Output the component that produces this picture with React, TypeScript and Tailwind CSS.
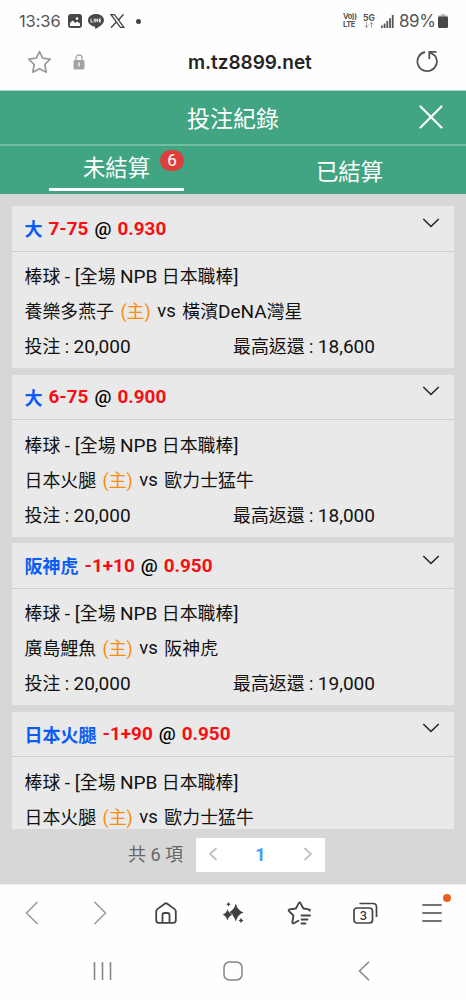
import React from 'react';

interface Bet {
  pick: string;
  line: string;
  odds: string;
  home: string;
  away: string;
  awayLatin?: string;
  awaySuffix?: string;
  stake?: string;
  maxReturn?: string;
}

const bets: Bet[] = [
  { pick: '大', line: '7-75', odds: '0.930', home: '養樂多燕子', away: '橫濱', awayLatin: 'DeNA', awaySuffix: '灣星', stake: '20,000', maxReturn: '18,600' },
  { pick: '大', line: '6-75', odds: '0.900', home: '日本火腿', away: '歐力士猛牛', stake: '20,000', maxReturn: '18,000' },
  { pick: '阪神虎', line: '-1+10', odds: '0.950', home: '廣島鯉魚', away: '阪神虎', stake: '20,000', maxReturn: '19,000' },
  { pick: '日本火腿', line: '-1+90', odds: '0.950', home: '日本火腿', away: '歐力士猛牛' },
];

const StatusBar: React.FC = () => (
  <div className="flex h-10 items-center pl-[19px] pr-[18px] pt-[2px] font-['Inter',sans-serif] text-[#555]">
    <span className="w-[42px] whitespace-nowrap text-[16.500px] tracking-[-0.1px]">13:36</span>
    <svg className="ml-[7px]" width="14" height="14" viewBox="0 0 14 14">
      <rect width="14" height="14" rx="3" fill="#484848" />
      <path d="M2 9 4.800 6.500l2.600 2.400 1.800-1.400L12 9.500V12H2z" fill="#fff" />
      <circle cx="9" cy="4.600" r="1.300" fill="#fff" />
    </svg>
    <svg className="ml-[6px]" width="16" height="15" viewBox="0 0 16 15">
      <path d="M8 0C3.500 0 0 2.700 0 6.300c0 3.200 2.800 5.600 6.600 6.200.6.1.5.7.4 1.600-.1.700.3.800 1 .5C11.300 13 16 10 16 6.300 16 2.700 12.500 0 8 0z" fill="#484848" />
      <path d="M3 4.700v3.400h1.800M6.200 4.500v3.800M7.700 8.300V4.900l2 3V4.500M13 4.900h-1.600v3.200H13M11.400 6.500h1.500" fill="none" stroke="#fff" strokeWidth=".9" />
    </svg>
    <svg className="ml-[6px]" width="15" height="14" viewBox="0 0 15 14" fill="none" stroke="#444">
      <path d="M1 .7h3.500l9.400 12.600h-3.500z" strokeWidth="1.300" />
      <path d="M13.500.3 8.300 6.200M6.200 8.200.9 13.700" strokeWidth="1.400" />
    </svg>
    <span className="ml-[11px] h-[5px] w-[5px] rounded-full bg-[#444]" />

    <div className="ml-auto flex items-center">
      <div className="w-[14px] text-[7.500px] font-bold leading-[8px] tracking-[-0.4px]">
        <div className="whitespace-nowrap">Vo))</div>
        <div>LTE</div>
      </div>
      <div className="ml-[6px] flex w-[12px] flex-col items-center text-[8.500px] font-bold leading-[8px]">
        <span>5G</span>
        <svg width="10" height="6" viewBox="0 0 10 6" fill="none" stroke="#999" strokeWidth=".9">
          <path d="M2.500 0v5.500M.5 3.500l2 2 2-2M7.500 6V.5M5.500 2.500l2-2 2 2" />
        </svg>
      </div>
      <svg className="ml-[6px]" width="13" height="13" viewBox="0 0 13 13" fill="#555">
        <path d="M0 10.500h1.800V13H0zM2.700 8.500h1.800V13H2.700zM5.400 6h1.800v7H5.400zM8.100 3.200h1.800V13H8.100zM10.800 0h1.800v13h-1.800z" />
      </svg>
      <span className="ml-[5px] mt-px w-[37px] whitespace-nowrap text-[17px] tracking-[-0.400px]">89%</span>
      <svg className="ml-[2px]" width="10" height="14" viewBox="0 0 10 14">
        <path d="M3 0h4v1.500h3V4H0V1.500h3z" fill="#bbb" />
        <rect y="2.500" width="10" height="11.500" rx="1.500" fill="#484848" />
      </svg>
    </div>
  </div>
);

const AddressBar: React.FC = () => (
  <div className="flex h-[51px] items-center border-b border-[#a9d8c6] pb-[7px] pl-[27px] pr-[28px]">
    <div className="flex items-center gap-[21px]">
      <svg width="25" height="24" viewBox="0 0 25 24" fill="none" stroke="#9a9a9a" strokeWidth="1.700" strokeLinejoin="round">
        <path d="M12.500 1.500 15.700 8.200 23.300 9.200 17.800 14.500 19.200 22.200 12.500 18.700 5.800 22.200 7.200 14.500 1.700 9.200 9.300 8.200z" />
      </svg>
      <svg width="12" height="16" viewBox="0 0 12 16">
        <path d="M3 7V4a3 3 0 0 1 6 0v3" fill="none" stroke="#aaa" strokeWidth="1.300" />
        <rect x=".5" y="6" width="11" height="9.500" rx="1.500" fill="#a3a3a3" />
        <path d="M6 8.500v4" stroke="#fff" strokeWidth="1.300" />
      </svg>
    </div>
    <div className="ml-[103px] mt-[3px] whitespace-nowrap font-['Inter',sans-serif] text-[19px] font-semibold tracking-[-0.050px] text-[#252525]">m.tz8899.net</div>
    <svg className="ml-auto" width="23" height="23" viewBox="0 0 23 23" fill="none" stroke="#555" strokeWidth="1.800">
      <path d="M10 2a9.700 9.700 0 1 0 10.300 4.200Q18.500 4.300 14.500 2.200M21.500 1.800h-7.200v7.200" />
    </svg>
  </div>
);

const BetCard: React.FC<{ bet: Bet }> = ({ bet }) => (
  <div className="mb-[6.500px] h-[162px] shrink-0 bg-[#e9e9e9]">
    <div className="flex h-[45.500px] items-center justify-between border-b border-[#cdcdcd] pl-[12.500px] pr-[14px]">
      <div className="flex items-center gap-[6px] whitespace-nowrap pt-[1.500px] text-[18.900px] font-bold text-[#f90c12]">
        <span className="relative top-px text-[18px] text-[#0b5cf5]">{bet.pick}</span>
        <span>{bet.line}</span>
        <span className="font-medium text-black">@</span>
        <span>{bet.odds}</span>
      </div>
      <svg className="mb-[11px]" width="18" height="10" viewBox="0 0 18 10" fill="none" stroke="#222" strokeWidth="1.500">
        <path d="M1.300 1 9 8.500 16.700 1" />
      </svg>
    </div>
    <div className="whitespace-nowrap pl-[12.500px] pt-[7.600px] text-[17.900px] leading-[35px] text-[#111]">
      <div className="h-[35px]">
        棒球 <span className="text-[19px]">- [</span>全場 <span className="text-[19px]">NPB</span> 日本職棒<span className="text-[19px]">]</span>
      </div>
      <div className="flex h-[35px] gap-[6.500px]">
        <span>{bet.home}</span>
        <span className="text-[#fb8c0b]">(主)</span>
        <span className="text-[18.500px]">vs</span>
        <span>
          {bet.away}
          {bet.awayLatin && <span className="text-[19px]">{bet.awayLatin}</span>}
          {bet.awaySuffix}
        </span>
      </div>
      {bet.stake && (
        <div className="flex h-[35px]">
          <span className="w-[208.500px]">投注 : <span className="text-[19px]">{bet.stake}</span></span>
          <span>最高返還 : <span className="text-[19px]">{bet.maxReturn}</span></span>
        </div>
      )}
    </div>
  </div>
);

const BrowserBar: React.FC = () => (
  <div className="grid h-[59px] grid-cols-7 items-center justify-items-center border-t border-[#eee] pb-[3px]">
    <svg className="mr-[2px]" width="14" height="24" viewBox="0 0 14 24" fill="none" stroke="#999" strokeWidth="1.500"><path d="M12.500 1 1.500 12l11 11" /></svg>
    <svg className="ml-px" width="14" height="24" viewBox="0 0 14 24" fill="none" stroke="#999" strokeWidth="1.500"><path d="m1.500 1 11 11-11 11" /></svg>
    <svg width="22" height="22" viewBox="0 0 22 22" fill="none" stroke="#444" strokeWidth="1.800" strokeLinejoin="round">
      <path d="M1.200 9.300c0-1 .4-1.500 1.200-2.200l7.300-5.400c.8-.6 1.800-.6 2.600 0l7.300 5.400c.8.700 1.200 1.200 1.200 2.200v9c0 1.800-.7 2.500-2.500 2.500H3.700c-1.800 0-2.500-.7-2.500-2.500z" />
      <path d="M7.500 20.800V13c0-1.300.7-2 2-2h3c1.300 0 2 .7 2 2v7.800" />
    </svg>
    <svg width="22" height="22" viewBox="0 0 22 22" fill="#404040">
      <path d="M13.800 1.500q1.800 7.200 7.700 9-5.900 1.800-7.700 9-1.800-7.200-7.700-9 5.900-1.800 7.700-9z" />
      <path d="M5.500 6.500q1.200 5 5.300 6.200-4.100 1.200-5.300 6.200-1.200-5-5.300-6.200 4.100-1.200 5.300-6.200z" stroke="#fefefe" strokeWidth=".5" />
      <path d="M6.500 0q.5 1.900 2.300 2.300-1.800.5-2.300 2.400-.5-1.900-2.300-2.400Q6 1.900 6.500 0zM19 15.800q.5 2.200 2.500 2.700-2 .5-2.500 2.700-.5-2.200-2.500-2.700 2-.5 2.500-2.700z" />
    </svg>
    <svg className="mr-[2px]" width="24" height="24" viewBox="0 0 24 24" fill="none" stroke="#444" strokeWidth="1.800" strokeLinecap="round" strokeLinejoin="round">
      <path d="M22.500 9.700c.7-.7.300-1.300-.6-1.400l-5.500-.8-2.900-5.300c-.6-1-1.300-1-1.800 0L8.900 7.500l-6.300.9c-1 .2-1.400.9-.6 1.700L6.400 14.500l-1 6.500c-.2 1.200.5 1.700 1.500 1.200l4.400-2.400" />
      <path d="M14.500 14.500h8.500M14.500 18.500h6M14.500 22.500h4" />
    </svg>
    <svg className="mr-px" width="25" height="22" viewBox="0 0 25 22" fill="none" stroke="#444" strokeWidth="1.700">
      <rect x="1" y="6" width="18.500" height="15" rx="3" />
      <path d="M6.500 1.500h13.500c2.500 0 3.500 1 3.500 3.500v10" />
      <text x="10.200" y="17.800" textAnchor="middle" fill="#333" stroke="none" fontSize="12" fontFamily="Inter, sans-serif" fontWeight="500">3</text>
    </svg>
    <div className="relative right-px">
      <svg width="20" height="20" viewBox="0 0 20 20" stroke="#444" strokeWidth="1.700" strokeLinecap="round"><path d="M1 2h18M1 10h18M1 18h18" /></svg>
      <span className="absolute -right-[9px] -top-[9px] h-[8px] w-[8px] rounded-full bg-[#e8601c]" />
    </div>
  </div>
);

const SystemNav: React.FC = () => (
  <div className="flex h-[57px] items-center justify-between pb-[2px] pl-[92px] pr-[96px]">
    <svg width="20" height="20" viewBox="0 0 20 20" stroke="#858585" strokeWidth="1.600"><path d="M2.500 1v18M10.500 1v18M18.500 1v18" /></svg>
    <svg className="relative right-[2px]" width="20" height="20" viewBox="0 0 20 20" fill="none" stroke="#858585" strokeWidth="1.500"><rect x="1" y="1" width="18" height="18" rx="5.500" /></svg>
    <svg width="12" height="20" viewBox="0 0 12 20" fill="none" stroke="#858585" strokeWidth="1.500"><path d="m11 .8-9.500 9.200 9.500 9.200" /></svg>
  </div>
);

const App: React.FC = () => {
  return (
    <div className="flex h-[1000px] w-[466px] flex-col overflow-hidden bg-[#fefefe] font-['Roboto','Noto_Sans_CJK_TC',sans-serif]">
      <StatusBar />
      <AddressBar />

      <div className="h-[103px] bg-[#41a482] text-white">
        <div className="relative flex h-[54.500px] items-center justify-center border-b-2 border-[#73bda2] pt-[5px] text-[23px]">
          投注紀錄
          <svg className="absolute right-[23px] top-[14px]" width="24" height="24" viewBox="0 0 24 24" stroke="#fff" strokeWidth="2.200" strokeLinecap="round"><path d="m1.500 1.500 21 21M22.500 1.500l-21 21" /></svg>
        </div>
        <div className="grid h-[48.500px] grid-cols-2 text-[22.400px] leading-[45px]">
          <div className="relative mx-auto h-[45px] w-[135px] border-b-[3px] border-white text-center">
            未結算
            <span className="absolute right-0 top-[4px] flex h-[21px] w-6 items-center justify-center rounded-full bg-[#df3f3c] text-[17px]">6</span>
          </div>
          <div className="pt-[4px] text-center">已結算</div>
        </div>
      </div>

      <div className="flex h-[690px] flex-col bg-[#d7d7d7] px-3 pt-3">
        <div className="flex h-[623px] flex-col overflow-hidden">
          {bets.map((bet, index) => (
            <BetCard key={index} bet={bet} />
          ))}
        </div>
        <div className="mt-[9px] flex h-[34px] items-center pl-[116px] text-[18px] text-[#666]">
          <span className="w-[68px] whitespace-nowrap pb-px">共 6 項</span>
          <div className="flex h-[34px] w-[129px] items-center justify-between bg-white px-[12px] pb-[2px]">
            <svg width="10" height="14" viewBox="0 0 10 14" fill="none" stroke="#c0c0c0" strokeWidth="1.800"><path d="M8.500 1 2 7l6.500 6" /></svg>
            <span className="font-bold text-[#409eff]">1</span>
            <svg width="10" height="14" viewBox="0 0 10 14" fill="none" stroke="#c0c0c0" strokeWidth="1.800"><path d="M1.500 1 8 7l-6.500 6" /></svg>
          </div>
        </div>
      </div>

      <BrowserBar />
      <SystemNav />
    </div>
  );
};

export default App;
